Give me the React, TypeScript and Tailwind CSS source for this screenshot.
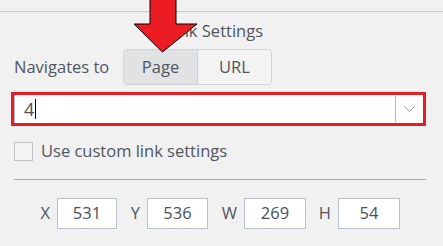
import React from 'react';

const font = { fontFamily: '"Open Sans", "Noto Sans", sans-serif' };

const CoordField: React.FC<{ label: string; value: string; labelW: string; boxW: string }> = ({ label, value, labelW, boxW }) => (
  <div className="flex items-center">
    <span className={`${labelW} pr-[7px] text-right text-[16.5px] text-[#50565e] leading-none`}>{label}</span>
    <div className={`${boxW} h-[31px] bg-white border border-[#b9c0c9] flex items-center justify-center text-[16.5px] text-[#4a5058]`}>
      {value}
    </div>
  </div>
);

export default function App() {
  return (
    <div className="relative w-[443px] h-[246px] bg-[#f1f1f1] overflow-hidden" style={font}>
      {/* top separator */}
      <div className="h-[12px] border-b border-[#c9c9c9]" />
      <div className="h-px bg-[#e9eaec]" />

      {/* title */}
      <div className="h-[36px] pr-[14px] flex items-center justify-center text-[16.5px] text-[#50565e]">
        Link Settings
      </div>

      {/* navigates to */}
      <div className="flex items-center pl-[14px] h-[36px]">
        <span className="text-[16.5px] text-[#50565e] w-[109px]">Navigates to</span>
        <div className="flex h-[36px] w-[149px] rounded-[4px] border border-[#d2d3d5] overflow-hidden text-[16.5px] text-[#50565e]">
          <div className="w-[74px] bg-[#e1e2e4] border-r border-[#d2d3d5] flex items-center justify-center">Page</div>
          <div className="flex-1 bg-[#f3f3f3] flex items-center justify-center">URL</div>
        </div>
      </div>

      {/* page select, highlighted */}
      <div className="ml-[11px] mt-[7px] w-[415px] h-[34px] border-[3px] border-[#e81c24] bg-white flex items-stretch">
        <div className="w-px bg-[#a9c0dc]" />
        <div className="flex-1 flex items-center pl-[9px] text-[18px] text-[#4a5058]">
          4<span className="inline-block w-px h-[20px] bg-black ml-[1px]" />
        </div>
        <div className="w-px my-[1px] bg-[#a9b9cf]" />
        <div className="w-[27px] flex items-center justify-center">
          <svg width="11" height="7" viewBox="0 0 11 7">
            <path d="M0.5 0.5 L5.5 5.5 L10.5 0.5" fill="none" stroke="#9a9a9a" strokeWidth="1" />
          </svg>
        </div>
      </div>

      {/* custom link settings */}
      <div className="flex items-center pl-[14px] mt-[16px] h-[19px]">
        <div className="w-[19px] h-[19px] border border-[#c2c2c2] bg-[#f4f4f4]" />
        <span className="ml-[8px] text-[16.5px] text-[#50565e]">Use custom link settings</span>
      </div>

      <div className="ml-[14px] mt-[18px] w-[412px] h-px bg-[#a9a9a9]" />

      {/* position / size */}
      <div className="flex items-center pl-[33px] mt-[18px]">
        <CoordField label="X" value="531" labelW="w-[24px]" boxW="w-[60px]" />
        <CoordField label="Y" value="536" labelW="w-[30px]" boxW="w-[61px]" />
        <CoordField label="W" value="269" labelW="w-[36px]" boxW="w-[62px]" />
        <CoordField label="H" value="54" labelW="w-[32px]" boxW="w-[62px]" />
      </div>

      {/* annotation arrow */}
      <svg className="absolute left-[130px] top-0" width="72" height="56" viewBox="0 0 72 56">
        <polygon
          points="20,-2 46,-2 46,24 67,24 32.5,52 4,24 20,24"
          fill="#ec1c24"
          stroke="#000"
          strokeWidth="1"
        />
      </svg>
    </div>
  );
}
